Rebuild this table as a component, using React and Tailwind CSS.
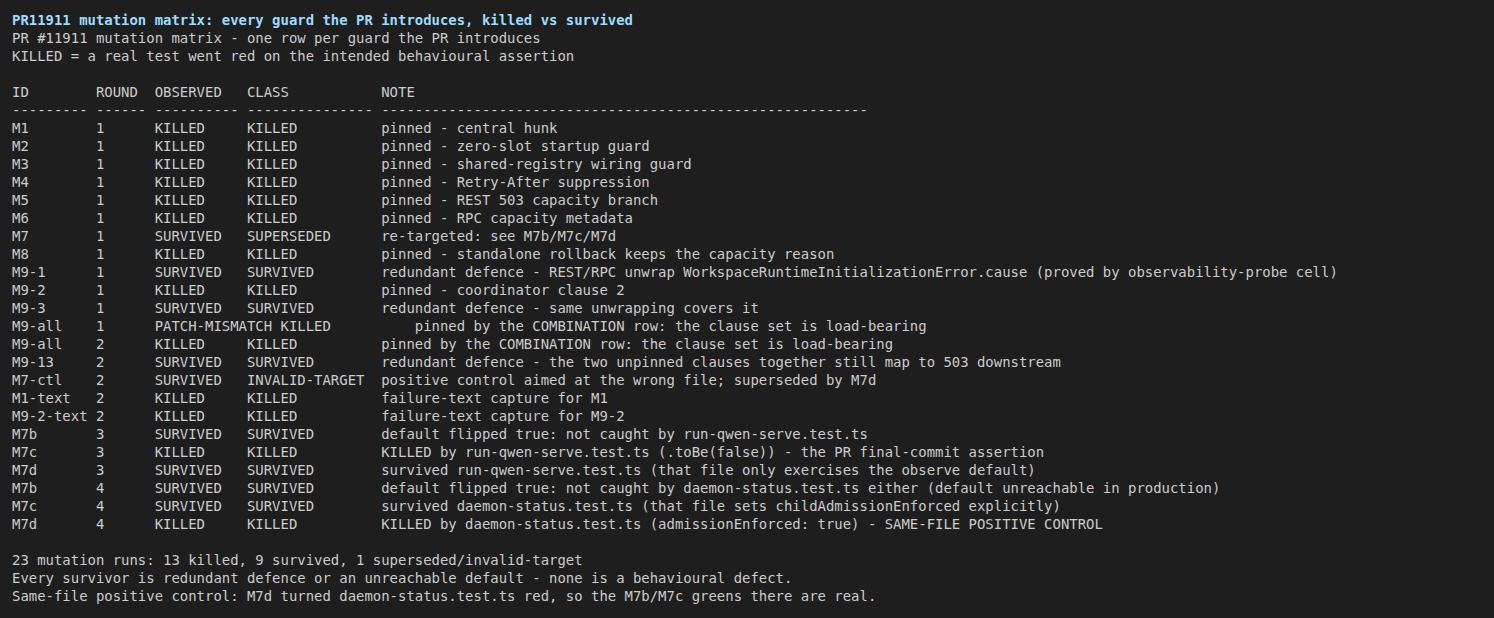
const rows = [
  ["M1", "1", "KILLED", "KILLED", "pinned - central hunk"],
  ["M2", "1", "KILLED", "KILLED", "pinned - zero-slot startup guard"],
  ["M3", "1", "KILLED", "KILLED", "pinned - shared-registry wiring guard"],
  ["M4", "1", "KILLED", "KILLED", "pinned - Retry-After suppression"],
  ["M5", "1", "KILLED", "KILLED", "pinned - REST 503 capacity branch"],
  ["M6", "1", "KILLED", "KILLED", "pinned - RPC capacity metadata"],
  ["M7", "1", "SURVIVED", "SUPERSEDED", "re-targeted: see M7b/M7c/M7d"],
  ["M8", "1", "KILLED", "KILLED", "pinned - standalone rollback keeps the capacity reason"],
  ["M9-1", "1", "SURVIVED", "SURVIVED", "redundant defence - REST/RPC unwrap WorkspaceRuntimeInitializationError.cause (proved by observability-probe cell)"],
  ["M9-2", "1", "KILLED", "KILLED", "pinned - coordinator clause 2"],
  ["M9-3", "1", "SURVIVED", "SURVIVED", "redundant defence - same unwrapping covers it"],
  ["M9-all", "1", "PATCH-MISMATCH", "KILLED", "pinned by the COMBINATION row: the clause set is load-bearing"],
  ["M9-all", "2", "KILLED", "KILLED", "pinned by the COMBINATION row: the clause set is load-bearing"],
  ["M9-13", "2", "SURVIVED", "SURVIVED", "redundant defence - the two unpinned clauses together still map to 503 downstream"],
  ["M7-ctl", "2", "SURVIVED", "INVALID-TARGET", "positive control aimed at the wrong file; superseded by M7d"],
  ["M1-text", "2", "KILLED", "KILLED", "failure-text capture for M1"],
  ["M9-2-text", "2", "KILLED", "KILLED", "failure-text capture for M9-2"],
  ["M7b", "3", "SURVIVED", "SURVIVED", "default flipped true: not caught by run-qwen-serve.test.ts"],
  ["M7c", "3", "KILLED", "KILLED", "KILLED by run-qwen-serve.test.ts (.toBe(false)) - the PR final-commit assertion"],
  ["M7d", "3", "SURVIVED", "SURVIVED", "survived run-qwen-serve.test.ts (that file only exercises the observe default)"],
  ["M7b", "4", "SURVIVED", "SURVIVED", "default flipped true: not caught by daemon-status.test.ts either (default unreachable in production)"],
  ["M7c", "4", "SURVIVED", "SURVIVED", "survived daemon-status.test.ts (that file sets childAdmissionEnforced explicitly)"],
  ["M7d", "4", "KILLED", "KILLED", "KILLED by daemon-status.test.ts (admissionEnforced: true) - SAME-FILE POSITIVE CONTROL"],
];

const fmt = (a, b, c, d, e) =>
  `${a.padEnd(9)} ${b.padEnd(6)} ${c.padEnd(10)} ${d.padEnd(15)} ${e}`;

export default function App() {
  const lines = [
    "PR #11911 mutation matrix - one row per guard the PR introduces",
    "KILLED = a real test went red on the intended behavioural assertion",
    "",
    fmt("ID", "ROUND", "OBSERVED", "CLASS", "NOTE"),
    fmt("-".repeat(9), "-".repeat(6), "-".repeat(10), "-".repeat(15), "-".repeat(58)),
    ...rows.map((r) => fmt(...r)),
    "",
    "23 mutation runs: 13 killed, 9 survived, 1 superseded/invalid-target",
    "Every survivor is redundant defence or an unreachable default - none is a behavioural defect.",
    "Same-file positive control: M7d turned daemon-status.test.ts red, so the M7b/M7c greens there are real.",
  ];

  return (
    <div className="min-h-[618px] w-full bg-[#1e1e1e] pl-3 pt-[11px] font-['DejaVu_Sans_Mono',monospace] text-[13.95px] leading-[18px] text-[#cccccc] whitespace-pre">
      <div className="h-[18px] font-bold text-[#9cdcfe]">
        PR11911 mutation matrix: every guard the PR introduces, killed vs survived
      </div>
      {lines.map((l, i) => (
        <div key={i} className="h-[18px]">
          {l}
        </div>
      ))}
    </div>
  );
}
